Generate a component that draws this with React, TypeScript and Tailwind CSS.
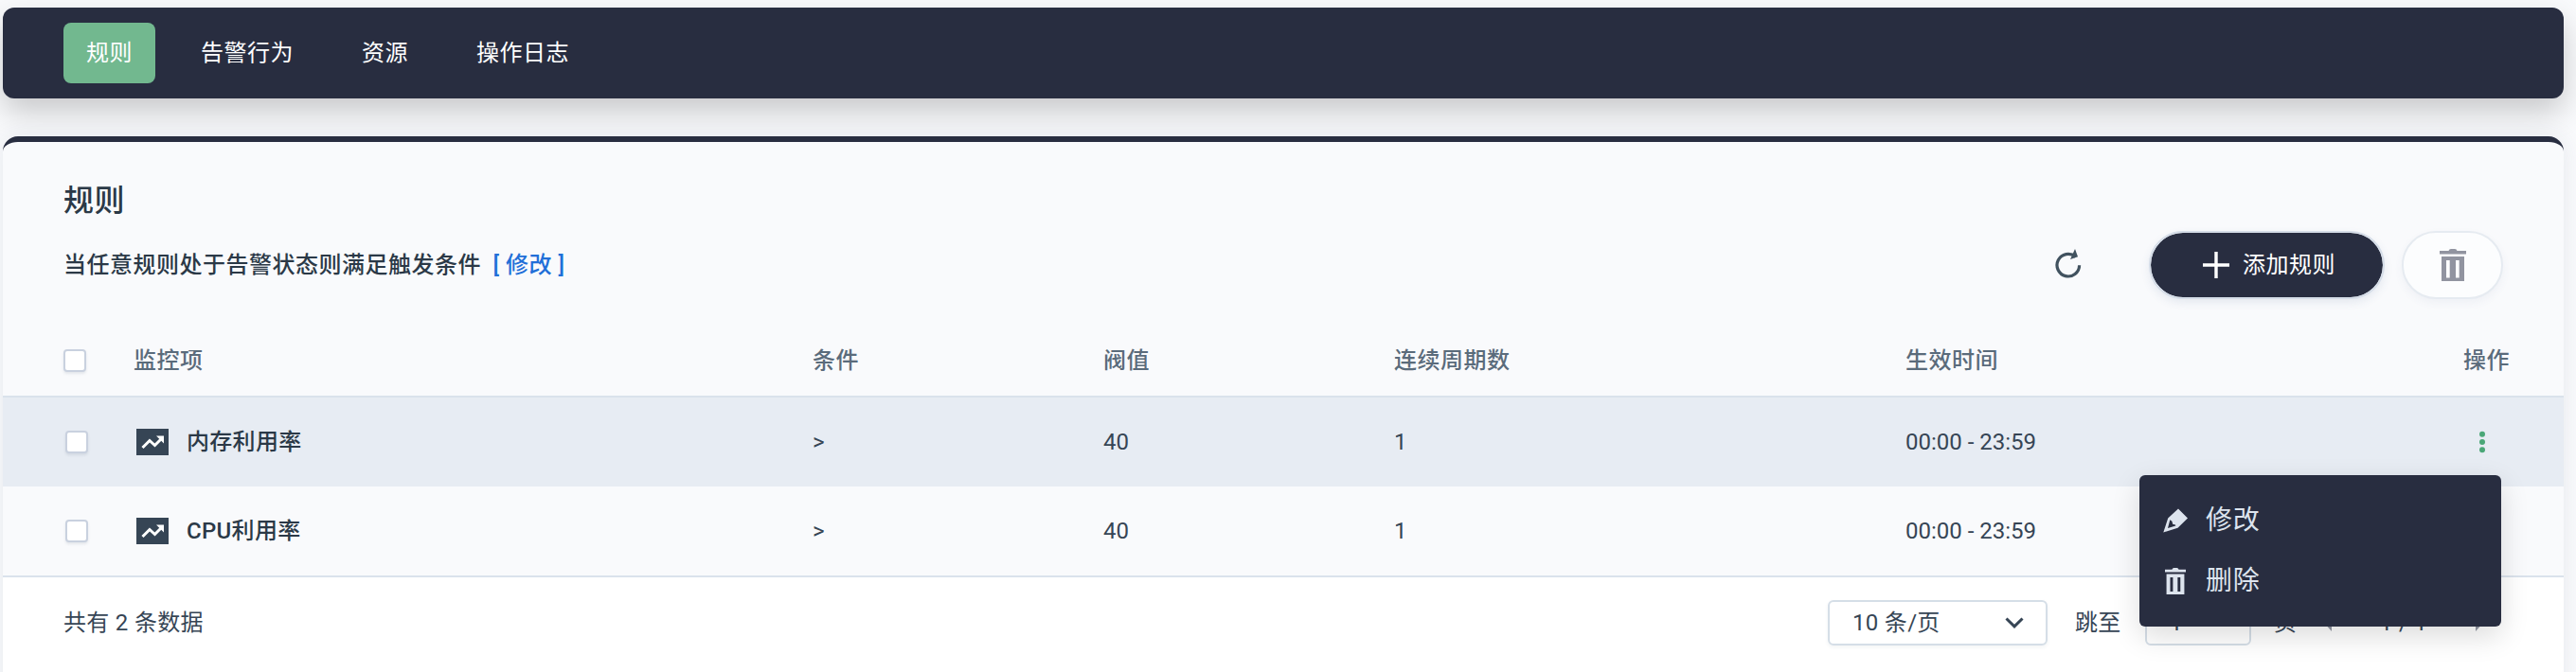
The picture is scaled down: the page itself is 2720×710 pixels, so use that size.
import React from "react";

const TrashIcon = ({ className }: { className: string }) => (
  <svg viewBox="0 0 28 34" className={className} fill="currentColor" preserveAspectRatio="none">
    <path d="M0 2H9.5Q10 0 12 0H16Q18 0 18.5 2H28V5.4H0Z" />
    <path fillRule="evenodd" d="M2 8H26V34H2ZM7 12V30.5H10.7V12ZM17 12V30.5H20.7V12Z" />
  </svg>
);

const PenIcon = ({ className }: { className: string }) => (
  <svg viewBox="0 0 26 26" className={className} fill="currentColor">
    <path fillRule="evenodd" d="M16 0.5 26 10.5 15.5 20.8 0.3 25.5 5.2 10.5ZM7.3 12.2 5 21 13.3 18.6 13 17.6 10.2 16.7 9.4 13.8Z" />
  </svg>
);

const TrendIcon = () => (
  <svg viewBox="0 0 34 28" className="h-7 w-[34px] shrink-0">
    <rect width="34" height="28" fill="#364555" />
    <path d="M6.5 20 14 12.5 19.5 17.5 26.5 10.5" fill="none" stroke="#fff" strokeWidth="3" />
    <path d="M21 7.5H29V15.5Z" fill="#fff" />
  </svg>
);

const Checkbox = ({ className = "" }: { className?: string }) => (
  <span className={`block size-6 shrink-0 rounded-[4px] border-2 border-[#c9d1df] bg-white shadow-[0_2px_3px_rgba(40,60,90,0.10)] ${className}`} />
);

const COLS = "grid grid-cols-[74px_717px_307px_307px_540px_589px_1fr] items-center pl-16";

const tabs = ["规则", "告警行为", "资源", "操作日志"];
const rows = [
  { name: "内存利用率", active: true },
  { name: "CPU利用率", active: false },
];

export default function App() {
  return (
    <div className="h-[710px] w-[2720px] overflow-hidden bg-[#f9fafc] pt-2 pr-[13px] pl-[3px] font-[Roboto,'Noto_Sans_CJK_SC',sans-serif] text-[24px] leading-9 tracking-[0.5px] text-[#364555]">
      <nav className="flex h-24 items-center gap-6 rounded-xl bg-[#282d40] pl-16 text-white shadow-[0_14px_32px_rgba(0,0,0,0.2)]">
        {tabs.map((t, i) => (
          <a key={t} className={`flex h-16 items-center rounded-lg px-6 ${i === 0 ? "bg-[#72b88f]" : ""}`}>{t}</a>
        ))}
      </nav>

      <main className="relative mt-10 h-[600px] rounded-t-[16px] border-t-[6px] border-[#282d40] bg-[#f9fafc] shadow-[0_0_24px_rgba(40,60,90,0.09)]">
        <header className="flex h-[194px] justify-between pl-16">
          <div>
            <h1 className="mt-[38px] text-[32px] leading-[48px] font-medium text-[#2b3947]">规则</h1>
            <p className="mt-[26px] font-medium whitespace-pre text-[#2b3947]">
              当任意规则处于告警状态则满足触发条件 <span className="ml-1.5 text-[#216fd8]">[ 修改 ]</span>
            </p>
          </div>
          <div className="mt-[94px] mr-16 flex h-[72px] items-center">
            <svg viewBox="0 0 28 32" className="mr-[71px] mb-1 h-8 w-7 text-[#41525f]">
              <path d="M21.5 9.2A11.8 11.8 0 1 0 25.6 18.2" fill="none" stroke="currentColor" strokeWidth="3.2" />
              <path d="M21 1 24 9.2 16 12Z" fill="currentColor" />
            </svg>
            <button className="mr-[18px] flex h-[72px] w-[249px] items-center rounded-full border-2 border-[#d5dde8] bg-[#282d40] bg-clip-padding pl-[55px] text-white shadow-[0_4px_10px_rgba(60,90,140,0.10)]">
              <svg viewBox="0 0 28 28" className="mr-[14px] size-7">
                <path d="M14 0V28M0 14H28" stroke="#fff" strokeWidth="3.4" />
              </svg>
              添加规则
            </button>
            <button className="flex h-[72px] w-[107px] items-center justify-center rounded-full border-2 border-[#e6ebf1] bg-[#fcfdfe] shadow-[0_4px_10px_rgba(60,90,140,0.06)]">
              <TrashIcon className="h-[34px] w-7 text-[#9194a0]" />
            </button>
          </div>
        </header>

        <div className={`${COLS} h-[76px] border-b-2 border-[#dae2ec] font-medium text-[#5a6b7b]`}>
          <Checkbox />
          <span>监控项</span>
          <span>条件</span>
          <span>阀值</span>
          <span>连续周期数</span>
          <span>生效时间</span>
          <span>操作</span>
        </div>
        {rows.map((r) => (
          <div key={r.name} className={`${COLS} h-[94px] tracking-normal ${r.active ? "bg-[#e7ecf3]" : ""}`}>
            <Checkbox className="ml-0.5" />
            <span className="flex items-center gap-[19px] pl-[3px] font-medium tracking-[0.3px] text-[#2b3947]">
              <TrendIcon />
              {r.name}
            </span>
            <span>&gt;</span>
            <span>40</span>
            <span>1</span>
            <span>00:00 - 23:59</span>
            {r.active && (
              <svg viewBox="0 0 6 24" className="ml-[17px] h-6 w-1.5" fill="#4aa777">
                <circle cx="3" cy="3.7" r="3" />
                <circle cx="3" cy="12" r="3" />
                <circle cx="3" cy="20.3" r="3" />
              </svg>
            )}
          </div>
        ))}

        <footer className="flex h-[104px] items-start border-t-2 border-[#dae2ec] bg-white pt-6 pl-16 tracking-[0.3px]">
          <span className="mt-1.5 mr-auto">共有 2 条数据</span>
          <div className="flex h-12 items-center">
            <div className="mr-[29px] flex h-12 w-[232px] items-center justify-between rounded-md border-2 border-[#d5dee7] bg-white pr-[23px] pl-6 shadow-[0_2px_4px_rgba(40,60,90,0.06)]">
              10 条/页
              <svg viewBox="0 0 20 12" className="h-3 w-5">
                <path d="M1.5 1.5 10 9.8 18.5 1.5" fill="none" stroke="#364555" strokeWidth="3" />
              </svg>
            </div>
            <span className="w-[74px]">跳至</span>
            <div className="mr-6 flex h-12 w-28 items-center rounded-md border-2 border-[#d5dee7] bg-white pl-6">1</div>
            <span className="w-[53px]">页</span>
            <svg viewBox="0 0 8 18" className="h-[18px] w-2" fill="#9297a3"><path d="M8 0V18L0 9Z" /></svg>
            <span className="w-[152px] text-center">1 / 1</span>
            <svg viewBox="0 0 8 18" className="mr-[85px] h-[18px] w-2" fill="#9297a3"><path d="M0 0V18L8 9Z" /></svg>
          </div>
        </footer>

        <div className="absolute top-[352px] right-[66px] flex h-40 w-[382px] flex-col rounded-md bg-[#282d40] py-4 text-[28px] tracking-[0.8px] text-[#dde4ee] shadow-[0_10px_30px_rgba(0,0,0,0.14)]">
          <div className="flex h-16 items-center pl-[25px]">
            <PenIcon className="mr-[19px] size-[26px]" />
            修改
          </div>
          <div className="flex h-16 items-center pl-[27px]">
            <TrashIcon className="mr-[21px] h-7 w-[22px]" />
            删除
          </div>
        </div>
      </main>
    </div>
  );
}
